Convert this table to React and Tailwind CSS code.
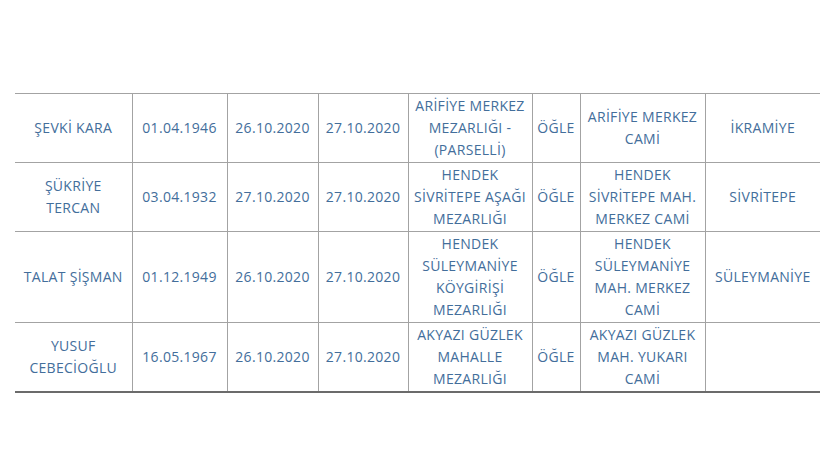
import React from 'react'

const rows = [
  ['ŞEVKİ KARA', '01.04.1946', '26.10.2020', '27.10.2020', 'ARİFİYE MERKEZ MEZARLIĞI - (PARSELLİ)', 'ÖĞLE', 'ARİFİYE MERKEZ CAMİ', 'İKRAMİYE'],
  ['ŞÜKRİYE TERCAN', '03.04.1932', '27.10.2020', '27.10.2020', 'HENDEK SİVRİTEPE AŞAĞI MEZARLIĞI', 'ÖĞLE', 'HENDEK SİVRİTEPE MAH. MERKEZ CAMİ', 'SİVRİTEPE'],
  ['TALAT ŞİŞMAN', '01.12.1949', '26.10.2020', '27.10.2020', 'HENDEK SÜLEYMANİYE KÖYGİRİŞİ MEZARLIĞI', 'ÖĞLE', 'HENDEK SÜLEYMANİYE MAH. MERKEZ CAMİ', 'SÜLEYMANİYE'],
  ['YUSUF CEBECİOĞLU', '16.05.1967', '26.10.2020', '27.10.2020', 'AKYAZI GÜZLEK MAHALLE MEZARLIĞI', 'ÖĞLE', 'AKYAZI GÜZLEK MAH. YUKARI CAMİ', ''],
]

const widths = [117, 95, 91, 90, 124, 48, 125, 115]

const App = () => {
  return (
    <div className="w-[820px] h-[475px] overflow-hidden bg-white pt-[93px] pl-[15px]" style={{ fontFamily: '"Open Sans", "Noto Sans", sans-serif' }}>
      <table className="table-fixed border-collapse w-[805px] text-[14px] tracking-[0.3px] leading-[22px] text-[#436e9b]">
        <colgroup>
          {widths.map((w, i) => (
            <col key={i} style={{ width: w }} />
          ))}
        </colgroup>
        <tbody>
          {rows.map((row, r) => (
            <tr key={r} className={r === rows.length - 1 ? 'border-t border-b-2 border-t-[#a3a3a3] border-b-[#6b6b6b]' : 'border-t border-[#a3a3a3]'}>
              {row.map((cell, c) => (
                <td
                  key={c}
                  className={(c === 0 ? '' : 'border-l border-[#a3a3a3] ') + 'px-[3px] py-px text-center align-middle'}
                >
                  {cell}
                </td>
              ))}
            </tr>
          ))}
        </tbody>
      </table>
    </div>
  )
}

export default App
